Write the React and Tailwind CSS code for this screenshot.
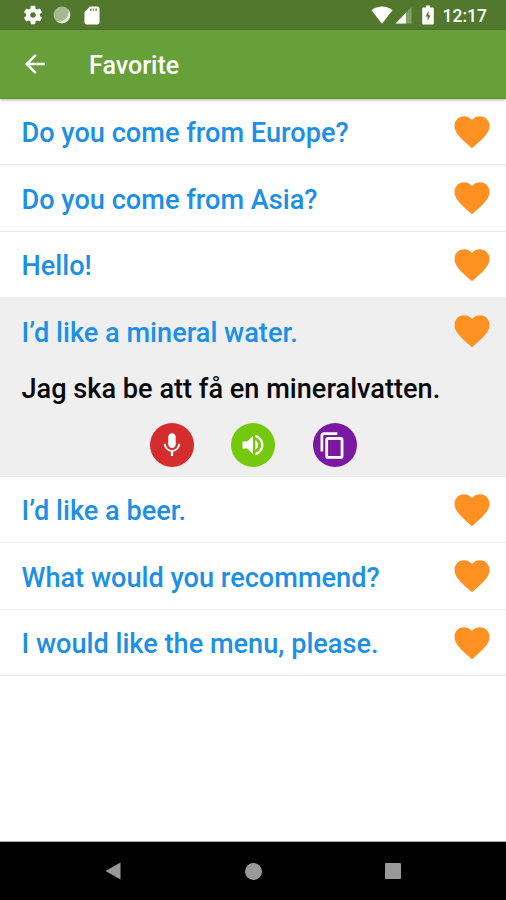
import React from "react";
import { MdArrowBack, MdFavorite, MdVolumeUp } from "react-icons/md";

const phrases = [
  { id: 1, text: "Do you come from Europe?" },
  { id: 2, text: "Do you come from Asia?" },
  { id: 3, text: "Hello!" },
  {
    id: 4,
    text: "I’d like a mineral water.",
    translation: "Jag ska be att få en mineralvatten.",
  },
  { id: 5, text: "I’d like a beer." },
  { id: 6, text: "What would you recommend?" },
  { id: 7, text: "I would like the menu, please." },
];

const GearIcon = () => (
  <svg className="h-[22px] w-[22px]" viewBox="0 0 24 24" fill="currentColor">
    <path d="M19.43 12.98c.04-.32.07-.64.07-.98s-.03-.66-.07-.98l2.11-1.65c.19-.15.24-.42.12-.64l-2-3.460c-.12-.22-.39-.3-.61-.22l-2.490 1c-.52-.4-1.080-.73-1.690-.98l-.38-2.650C14.460 2.180 14.250 2 14 2h-4c-.25 0-.46.18-.49.42l-.38 2.650c-.61.25-1.170.59-1.690.98l-2.490-1c-.23-.09-.49 0-.61.22l-2 3.460c-.13.22-.07.49.12.64l2.110 1.650c-.04.32-.07.65-.07.98s.03.66.07.98l-2.110 1.650c-.19.15-.24.42-.12.64l2 3.460c.12.22.39.3.61.22l2.490-1c.52.4 1.080.73 1.690.98l.38 2.650c.03.24.24.42.49.42h4c.25 0 .46-.18.49-.42l.38-2.650c.61-.25 1.170-.59 1.690-.98l2.490 1c.23.09.49 0 .61-.22l2-3.460c.12-.22.07-.49-.12-.64l-2.110-1.650zM12 15.100c-1.710 0-3.100-1.390-3.100-3.100s1.390-3.100 3.100-3.100 3.100 1.390 3.100 3.100-1.390 3.100-3.100 3.100z" />
  </svg>
);

const StatusBar = () => (
  <div className="flex h-[30px] shrink-0 items-center justify-between bg-[#51782d] pr-[19px] pl-[21.5px] text-white">
    <div className="flex items-center">
      <GearIcon />
      <svg className="ml-[9.5px] h-[18px] w-[18px]" viewBox="0 0 18 18">
        <circle cx="9" cy="9" r="8.5" fill="#a3ba8e" />
        <path d="M15 3a8.5 8.5 0 0 1-12 12 9.5 9.5 0 0 0 12-12z" fill="#e6ede0" />
      </svg>
      <svg className="ml-[13px] h-[19px] w-[16px]" viewBox="0 0 16 19">
        <path d="M6 0.5h7.5a2 2 0 0 1 2 2v14a2 2 0 0 1-2 2h-11a2 2 0 0 1-2-2V6z" fill="#fff" />
        <path d="M6 2.5h1.6V5H6zM8.7 2.5h1.6V5H8.7zM11.4 2.5H13V5h-1.6z" fill="#7d9a63" />
      </svg>
    </div>
    <div className="flex items-center">
      <svg className="h-[18px] w-[22px]" viewBox="0 0 22 18">
        <path d="M0.5 4.2C6.5-0.8 15.5-0.8 21.5 4.2L11 17.8z" fill="#fff" />
      </svg>
      <svg className="ml-[2px] h-[18px] w-[17px]" viewBox="0 0 17 18">
        <path d="M16.5 1v16.5H0.5z" fill="#83a069" />
        <path d="M11 6.7v10.8H0.5z" fill="#fff" />
      </svg>
      <svg className="ml-[10px] h-[20px] w-[12px]" viewBox="0 0 12 20">
        <path d="M4 0.5h4v2h2.5a1.3 1.3 0 0 1 1.3 1.3v14.4a1.3 1.3 0 0 1-1.3 1.3h-9a1.3 1.3 0 0 1-1.3-1.3V3.8A1.3 1.3 0 0 1 1.5 2.5H4z" fill="#fff" />
        <path d="M6.6 6L3.5 11.6h2.1v4.2L8.5 10.2H6.600z" fill="#51782d" />
      </svg>
      <span className="ml-[9px] pt-[3px] text-[17.5px] leading-none font-medium">12:17</span>
    </div>
  </div>
);

const MicIcon = () => (
  <svg className="h-[28px] w-[28px]" viewBox="0 0 24 24" fill="currentColor">
    <path d="M12 14.5c1.8 0 3.2-1.4 3.2-3.2V5.2C15.2 3.4 13.8 2 12 2S8.8 3.4 8.8 5.2v6.1c0 1.8 1.4 3.2 3.2 3.2zm5.3-3.5c0 3-2.54 5.4-5.3 5.4S6.7 14 6.7 11H5c0 3.41 2.72 6.23 6 6.72V21.5h2v-3.78c3.28-.48 6-3.3 6-6.72h-1.7z" />
  </svg>
);

const CopyIcon = () => (
  <svg className="h-[29px] w-[29px]" viewBox="0 0 24 24" fill="none" stroke="currentColor" strokeWidth="2.3">
    <path d="M3.2 17V4a1.8 1.8 0 0 1 1.800-1.800h11" />
    <rect x="7.200" y="6.200" width="12.700" height="15.700" rx="1" />
  </svg>
);

const ActionButton = ({ label, className, children }) => (
  <button
    aria-label={label}
    className={`flex h-[44px] w-[44px] items-center justify-center rounded-full text-white ${className}`}
  >
    {children}
  </button>
);

const PhraseRow = ({ phrase }) => {
  const open = Boolean(phrase.translation);

  return (
    <li className={`border-b border-[#ececec] ${open ? "h-[178.2px] bg-[#efefef]" : "h-[66.6px]"}`}>
      <div className="flex h-[66px] items-center justify-between pr-[13px] pl-[21.5px]">
        <span className="pt-[3px] text-[27.15px] leading-8 font-medium text-[#1c90e6]">
          {phrase.text}
        </span>
        <MdFavorite className="h-[42px] w-[42px] text-[#ff9122]" />
      </div>
      {open && (
        <>
          <p className="pt-[8.5px] pl-[21.5px] text-[27.15px] leading-8 font-medium text-[#080808]">
            {phrase.translation}
          </p>
          <div className="mt-[18.5px] flex justify-center gap-[37.5px]">
            <ActionButton label="Record" className="bg-[#d52c2e]">
              <MicIcon />
            </ActionButton>
            <ActionButton label="Listen" className="bg-[#75c90d]">
              <MdVolumeUp className="h-[28px] w-[28px]" />
            </ActionButton>
            <ActionButton label="Copy" className="bg-[#7a18a2] pr-[4px]">
              <CopyIcon />
            </ActionButton>
          </div>
        </>
      )}
    </li>
  );
};

const NavBar = () => (
  <div className="flex h-[59px] shrink-0 items-center justify-between border-t border-[#b0b0b0] bg-black pr-[105px] pl-[105px]">
    <svg className="h-[18px] w-[16px]" viewBox="0 0 16 18">
      <path d="M15.5 0.5v17L0.5 9z" fill="#999" />
    </svg>
    <div className="h-[17px] w-[17px] rounded-full bg-[#999]" />
    <div className="h-[16px] w-[16px] rounded-[1px] bg-[#999]" />
  </div>
);

export default function App() {
  return (
    <div className="flex h-[900px] w-[506px] flex-col overflow-hidden bg-white font-['Roboto',sans-serif]">
      <StatusBar />
      <header className="z-10 flex h-[68.7px] shrink-0 items-center border-b border-[#5f951f] bg-[#679f38] pl-[20px] text-white shadow-[0_1px_3px_rgba(0,0,0,0.3)]">
        <MdArrowBack className="h-[30px] w-[30px]" />
        <h1 className="ml-[39px] pt-[4px] text-[25.1px] leading-none font-medium">Favorite</h1>
      </header>
      <ul className="flex-1">
        {phrases.map((phrase) => (
          <PhraseRow key={phrase.id} phrase={phrase} />
        ))}
      </ul>
      <NavBar />
    </div>
  );
}
